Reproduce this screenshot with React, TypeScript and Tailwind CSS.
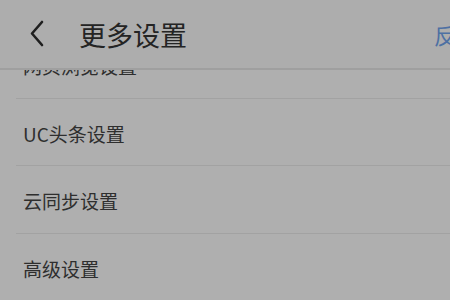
const items = ["网页浏览设置", "UC头条设置", "云同步设置", "高级设置"];

export default function App() {
    return (
        <div
            className="w-[450px] h-[300px] overflow-hidden bg-[#afafaf] flex flex-col"
            style={{ fontFamily: '"Noto Sans CJK SC", "Noto Sans", sans-serif' }}
        >
            <header className="h-[70px] shrink-0 flex items-center border-b-2 border-[#9f9f9f] bg-[#adadad] relative z-10">
                <div className="w-[79px] flex items-center pl-[30px]">
                    <svg width="14" height="28" viewBox="0 0 14 28" fill="none" className="text-[#1f1f1f]">
                        <polyline
                            points="12,2 2,13.5 12,25"
                            stroke="currentColor"
                            strokeWidth="2.6"
                            strokeLinecap="round"
                            strokeLinejoin="round"
                        />
                    </svg>
                </div>
                <h1 className="text-[27px] text-[#242424] leading-none">更多设置</h1>
                <span className="ml-auto mr-[-28px] text-[22px] text-[#4d70a3] leading-none whitespace-nowrap">反馈</span>
            </header>

            <div className="flex-1 overflow-hidden">
                <ul className="-mt-[39px]">
                    {items.map((item) => (
                        <li key={item} className="h-[67.5px] pl-[16px]">
                            <div className="h-full flex items-center border-b border-[#a2a2a2]">
                                <span className="pl-[7px] pt-[3px] text-[19px] text-[#2e2e2e] leading-none">{item}</span>
                            </div>
                        </li>
                    ))}
                </ul>
            </div>
        </div>
    );
}
